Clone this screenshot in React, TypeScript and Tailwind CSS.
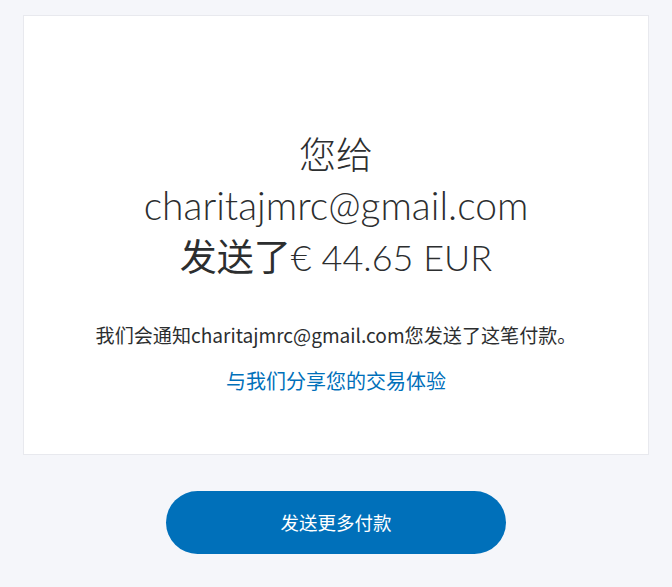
export default function App() {
  return (
    <div className="min-h-[587px] w-full bg-[#f5f6fa] pt-[15px]" style={{ fontFamily: '"Lato", "Noto Sans CJK SC", sans-serif' }}>
      <div className="mx-[23px] h-[440px] border border-[#e8e9ee] bg-white flex flex-col items-center pt-[113px]">
        <h1 className="text-center text-[37px] leading-[51px] font-light text-[#2c2e2f]">
          <div>您给</div>
          <div className="text-[39px]">charitajmrc@gmail.com</div>
          <div>
            <span className="font-normal">发送了</span>
            <span className="text-[36px]">€ 44.65 EUR</span>
          </div>
        </h1>
        <p className="mt-[38px] text-[19.1px] leading-[28px] text-[#2c2e2f]" style={{ fontFamily: '"Noto Sans CJK SC", sans-serif' }}>
          我们会通知charitajmrc@gmail.com您发送了这笔付款。
        </p>
        <a className="mt-[18px] text-[20px] leading-[28px] text-[#0070ba]" style={{ fontFamily: '"Noto Sans CJK SC", sans-serif' }}>
          与我们分享您的交易体验
        </a>
      </div>
      <div className="flex justify-center pt-[36px]">
        <button className="h-[63px] w-[340px] rounded-full bg-[#0070ba] text-white text-[18.5px]" style={{ fontFamily: '"Noto Sans CJK SC", sans-serif' }}>
          发送更多付款
        </button>
      </div>
    </div>
  );
}
